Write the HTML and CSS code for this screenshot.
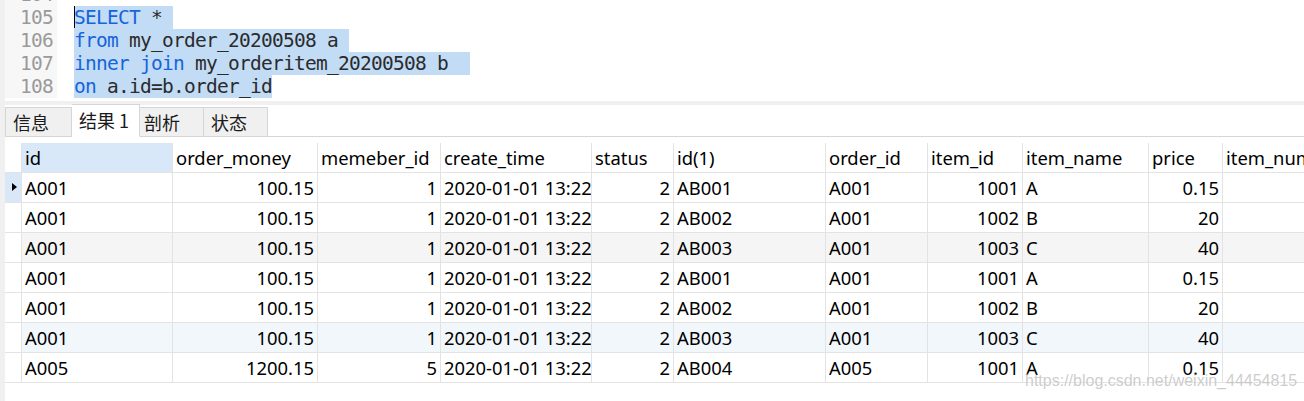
FILE: index.html
```html
<!DOCTYPE html>
<html lang="zh-CN">
<head>
    <meta charset="UTF-8">
    <title>查询结果</title>
    <link rel="stylesheet" href="styles.css">
</head>
<body>
    <div class="editor">
        <div class="line first-line"><span class="num">104</span><span class="src"></span></div>
        <div class="line"><span class="num">105</span><span class="src"><span class="sel"><span class="cursor"></span><span class="kw">SELECT</span> *</span></span></div>
        <div class="line"><span class="num">106</span><span class="src"><span class="sel"><span class="kw">from</span> my_order_20200508 a</span></span></div>
        <div class="line"><span class="num">107</span><span class="src"><span class="sel"><span class="kw">inner join</span> my_orderitem_20200508 b </span></span></div>
        <div class="line"><span class="num">108</span><span class="src"><span class="sel last"><span class="kw">on</span> a.id=b.order_id</span></span></div>
    </div>
    <div class="split"></div>

    <div class="panel">
        <div class="tabs">
            <div class="tab tab-info">信息</div>
            <div class="tab tab-result active">结果 1</div>
            <div class="tab tab-profile">剖析</div>
            <div class="tab tab-status">状态</div>
        </div>

        <div class="grid" id="grid"></div>
        <div class="watermark">https://blog.csdn.net/weixin_44454815</div>
    </div>

    <script>
        const columns = [
            { name: "id", align: "left" },
            { name: "order_money", align: "right" },
            { name: "memeber_id", align: "right" },
            { name: "create_time", align: "left" },
            { name: "status", align: "right" },
            { name: "id(1)", align: "left" },
            { name: "order_id", align: "left" },
            { name: "item_id", align: "right" },
            { name: "item_name", align: "left" },
            { name: "price", align: "right" },
            { name: "item_num", align: "right" }
        ];

        const rows = [
            ["A001", "100.15", "1", "2020-01-01 13:22:00", "2", "AB001", "A001", "1001", "A", "0.15", ""],
            ["A001", "100.15", "1", "2020-01-01 13:22:00", "2", "AB002", "A001", "1002", "B", "20", ""],
            ["A001", "100.15", "1", "2020-01-01 13:22:00", "2", "AB003", "A001", "1003", "C", "40", ""],
            ["A001", "100.15", "1", "2020-01-01 13:22:00", "2", "AB001", "A001", "1001", "A", "0.15", ""],
            ["A001", "100.15", "1", "2020-01-01 13:22:00", "2", "AB002", "A001", "1002", "B", "20", ""],
            ["A001", "100.15", "1", "2020-01-01 13:22:00", "2", "AB003", "A001", "1003", "C", "40", ""],
            ["A005", "1200.15", "5", "2020-01-01 13:22:00", "2", "AB004", "A005", "1001", "A", "0.15", ""]
        ];

        // row tints as they appear in the result grid
        const rowClass = { 2: "row-grey", 5: "row-blue" };

        const grid = document.getElementById("grid");

        function cell(text, classes) {
            const div = document.createElement("div");
            div.className = "cell " + classes;
            div.textContent = text;
            grid.appendChild(div);
        }

        cell("", "head selector");
        columns.forEach((col, i) => {
            cell(col.name, "head" + (i === 0 ? " head-active" : ""));
        });

        rows.forEach((row, r) => {
            const tint = rowClass[r] || "";
            cell("", "selector " + tint + (r === 0 ? " current" : ""));
            row.forEach((value, i) => {
                cell(value, tint + " " + columns[i].align);
            });
        });
    </script>
</body>
</html>
```

FILE: styles.css
```css
* {
    margin: 0;
    padding: 0;
    box-sizing: border-box;
}

body {
    width: 1304px;
    height: 401px;
    overflow: hidden;
    background: #f0f0f0;
    font-family: "Noto Sans", "Noto Sans CJK SC", sans-serif;
    color: #000;
}

/* SQL editor */
.editor {
    height: 101px;
    overflow: hidden;
    margin-left: 5px;
    background: #fff;
    font-family: "DejaVu Sans Mono", "Liberation Mono", monospace;
    font-size: 19.5px;
    letter-spacing: -0.74px;
}

.line {
    display: flex;
    height: 23px;
    line-height: 23px;
    white-space: pre;
}

.first-line {
    margin-top: -17px;
}

.num {
    width: 52px;
    padding-right: 4px;
    text-align: right;
    color: #9a9a9a;
    background: #f7f7f7;
}

.src {
    padding-left: 17px;
    color: #2b2b2b;
}

.sel {
    display: inline-block;
    padding-right: 11px;
    background: #c2dcf6;
}

.sel.last {
    padding-right: 0;
}

.kw {
    color: #1664da;
}

.cursor {
    display: inline-block;
    width: 1px;
    height: 22px;
    margin-right: -1px;
    vertical-align: top;
    background: #000;
}

.split {
    height: 4px;
}

/* result panel */
.panel {
    position: relative;
    height: 296px;
    margin-left: 5px;
    background: #fff;
}

.tabs {
    display: flex;
    align-items: flex-end;
    height: 32px;
    border-bottom: 1px solid #d6d6d6;
}

.tab {
    height: 30px;
    margin-bottom: -1px;
    padding-left: 7px;
    font-family: "Noto Sans CJK SC", sans-serif;
    font-size: 18px;
    line-height: 28px;
    color: #1a1a1a;
    background: #f0f0f0;
    border: 1px solid #d6d6d6;
    border-left: none;
}

.tab-info {
    width: 67px;
    border-left: 1px solid #d6d6d6;
}

.tab-result {
    width: 68px;
}

.tab-profile {
    width: 64px;
    padding-left: 4px;
}

.tab-status {
    width: 64px;
}

.tab.active {
    height: 33px;
    background: #fff;
    border-bottom-color: #fff;
    line-height: 30px;
}

/* data grid */
.grid {
    display: grid;
    grid-template-columns: 17px 151px 145px 123px 151px 82px 152px 102px 95px 126px 74px 120px;
    grid-auto-rows: 30px;
    margin-top: 6px;
    font-size: 18.4px;
}

.cell {
    padding: 0 3px;
    line-height: 29px;
    white-space: nowrap;
    overflow: hidden;
    border-right: 1px solid #e3e3e3;
    border-bottom: 1px solid #e3e3e3;
}

.head {
    background: #fff;
}

.head-active {
    background: #d8e8f8;
}

.right {
    text-align: right;
}

.row-grey {
    background: #f5f5f5;
}

.row-blue {
    background: #f2f7fc;
}

.selector {
    position: relative;
    padding: 0;
    background: #fff;
}

.selector.current {
    background: #d8e8f8;
}

.selector.current::after {
    content: "";
    position: absolute;
    left: 7px;
    top: 10px;
    border-left: 5px solid #000;
    border-top: 4px solid transparent;
    border-bottom: 4px solid transparent;
}

.watermark {
    position: absolute;
    left: 1020px;
    top: 267px;
    font-family: "Liberation Sans", Arial, sans-serif;
    font-size: 16px;
    color: rgba(170, 170, 170, 0.6);
    text-shadow: 0 0 2px #fff;
    pointer-events: none;
}
```
